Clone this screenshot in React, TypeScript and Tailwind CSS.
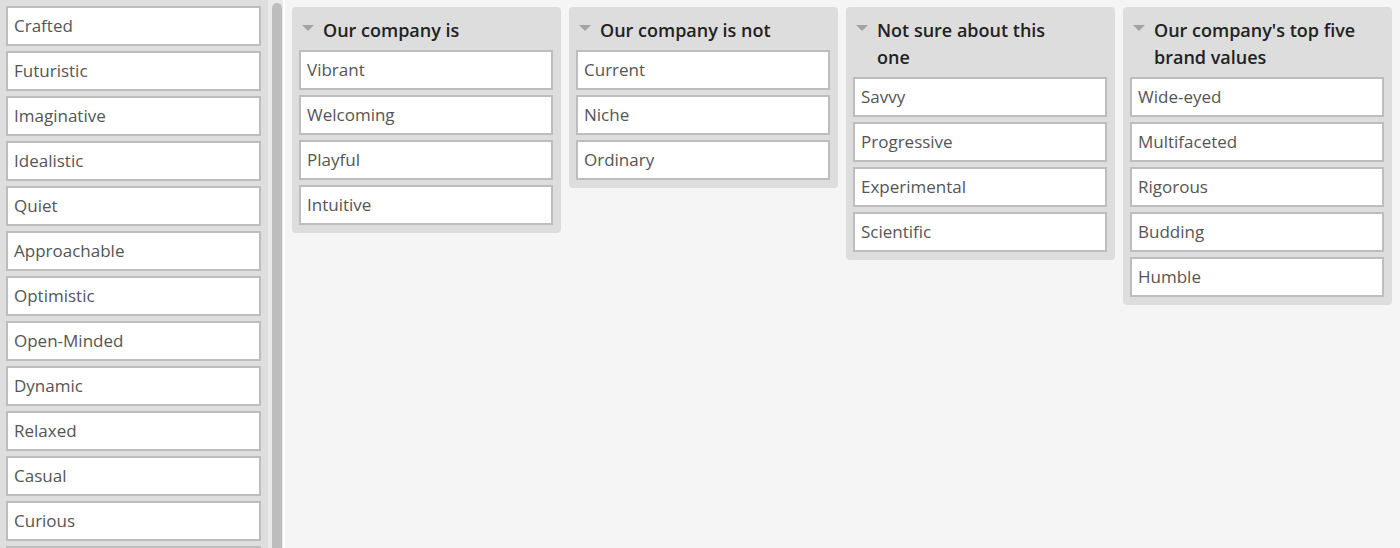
const POOL = [
  'Crafted',
  'Futuristic',
  'Imaginative',
  'Idealistic',
  'Quiet',
  'Approachable',
  'Optimistic',
  'Open-Minded',
  'Dynamic',
  'Relaxed',
  'Casual',
  'Curious',
  '',
];

const COLUMNS = [
  { title: 'Our company is', items: ['Vibrant', 'Welcoming', 'Playful', 'Intuitive'] },
  { title: 'Our company is not', items: ['Current', 'Niche', 'Ordinary'] },
  { title: 'Not sure about this one', items: ['Savvy', 'Progressive', 'Experimental', 'Scientific'] },
  {
    title: "Our company's top five brand values",
    items: ['Wide-eyed', 'Multifaceted', 'Rigorous', 'Budding', 'Humble'],
  },
];

function Card({ label, wide }: { label: string; wide?: boolean }) {
  return (
    <div
      className={`${wide ? 'w-[255px]' : 'w-[254px]'} h-10 shrink-0 flex items-center px-[6px] pb-[1px] bg-white border-2 border-[#bdbdbd] text-[17px] text-[#555] leading-none`}
    >
      {label}
    </div>
  );
}

function Column({ title, items }: { title: string; items: string[] }) {
  return (
    <div className="w-[269px] shrink-0 rounded-[4px] bg-[#dddddd] pl-[7px] pr-2 pt-[10px] pb-2">
      {/* Header */}
      <div className="flex items-start mb-[6px]">
        <div className="w-[24px] shrink-0 flex pt-[8px] pl-[3px]">
          <svg width="12" height="6" viewBox="0 0 12 6">
            <path d="M0 0 L12 0 L6 6 Z" fill="#a3a3a3" />
          </svg>
        </div>
        <h3 className="w-[202px] text-[18px] leading-[27px] font-semibold text-[#222]">{title}</h3>
      </div>

      {/* Cards */}
      <div className="flex flex-col gap-[5px]">
        {items.map((item) => (
          <Card key={item} label={item} />
        ))}
      </div>
    </div>
  );
}

export default function App() {
  return (
    <div
      className="w-[1400px] h-[548px] overflow-hidden flex bg-[#f5f5f5]"
      style={{ fontFamily: '"Open Sans", "Noto Sans", sans-serif' }}
    >
      {/* Pool sidebar */}
      <div className="w-[268px] shrink-0 h-full overflow-hidden bg-[#dedede] pl-[6px] pt-[6px]">
        <div className="flex flex-col gap-[5px]">
          {POOL.map((item, i) => (
            <Card key={i} label={item} wide />
          ))}
        </div>
      </div>

      {/* Scrollbar */}
      <div className="w-[17px] shrink-0 h-full bg-[#e9e9e9] border-r-2 border-white pl-[4px] pt-[3px]">
        <div className="w-[10px] h-[600px] rounded-full bg-[#bdbdbd]" />
      </div>

      {/* Board */}
      <div className="flex-1 flex items-start gap-2 pl-[7px] pt-[7px]">
        {COLUMNS.map((col) => (
          <Column key={col.title} title={col.title} items={col.items} />
        ))}
      </div>
    </div>
  );
}
